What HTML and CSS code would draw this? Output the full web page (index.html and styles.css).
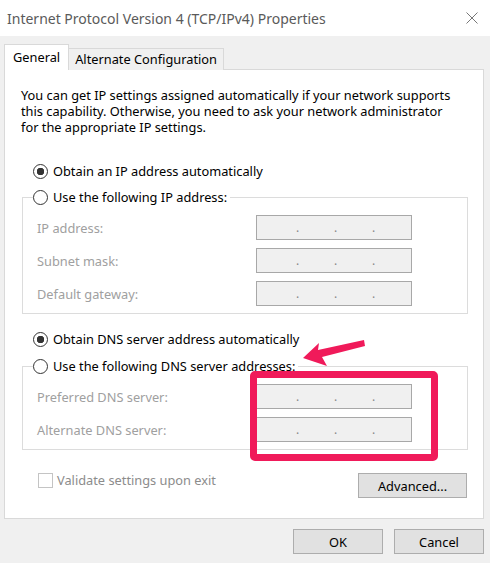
FILE: index.html
```
<!DOCTYPE html>
<html lang="en">

<head>
    <meta charset="UTF-8">
    <meta name="viewport" content="width=device-width, initial-scale=1.0">
    <title>Internet Protocol Version 4 (TCP/IPv4) Properties</title>
    <link rel="stylesheet" href="styles.css">
</head>

<body>
    <div class="dialog">
        <div class="titlebar">
            <span class="title">Internet Protocol Version 4 (TCP/IPv4) Properties</span>
            <svg class="close" width="12" height="12" viewBox="0 0 12 12">
                <path d="M0.5 0.5 L11.5 11.5 M11.5 0.5 L0.5 11.5" stroke="#777" stroke-width="1" fill="none" />
            </svg>
        </div>

        <div class="content">
            <div class="tabs">
                <div class="tab active">General</div>
                <div class="tab">Alternate Configuration</div>
            </div>

            <div class="panel">
                <p class="intro">You can get IP settings assigned automatically if your network supports<br>
                    this capability. Otherwise, you need to ask your network administrator<br>
                    for the appropriate IP settings.</p>

                <label class="radio first"><input type="radio" name="ip" checked> Obtain an IP address automatically</label>

                <fieldset class="group">
                    <legend><label class="radio"><input type="radio" name="ip"> Use the following IP address:</label></legend>
                    <div class="row">
                        <span class="lbl">IP address:</span>
                        <div class="ip"><span>.</span><span>.</span><span>.</span></div>
                    </div>
                    <div class="row">
                        <span class="lbl">Subnet mask:</span>
                        <div class="ip"><span>.</span><span>.</span><span>.</span></div>
                    </div>
                    <div class="row">
                        <span class="lbl">Default gateway:</span>
                        <div class="ip"><span>.</span><span>.</span><span>.</span></div>
                    </div>
                </fieldset>

                <label class="radio dns-auto"><input type="radio" name="dns" checked> Obtain DNS server address automatically</label>

                <fieldset class="group dns">
                    <legend><label class="radio"><input type="radio" name="dns"> Use the following DNS server addresses:</label></legend>
                    <div class="row">
                        <span class="lbl">Preferred DNS server:</span>
                        <div class="ip"><span>.</span><span>.</span><span>.</span></div>
                    </div>
                    <div class="row">
                        <span class="lbl">Alternate DNS server:</span>
                        <div class="ip"><span>.</span><span>.</span><span>.</span></div>
                    </div>
                </fieldset>

                <div class="bottom-row">
                    <label class="check"><span class="box"></span>Validate settings upon exit</label>
                    <button type="button" class="btn advanced">Advanced...</button>
                </div>
            </div>

            <div class="footer">
                <button type="button" class="btn">OK</button>
                <button type="button" class="btn">Cancel</button>
            </div>
        </div>

        <!-- annotation drawn over the screenshot -->
        <div class="mark-box"></div>
        <svg class="mark-arrow" width="490" height="563" viewBox="0 0 490 563">
            <polygon points="303,358 319,343 318,350 364,340 365,346 322,357 327,366" fill="#f01a5a" />
        </svg>
    </div>
</body>

</html>
```

FILE: styles.css
```
:root {
    --win-bg: #f0f0f0;
    --border: #d9d9d9;
    --text: #000;
    --disabled: #a0a0a0;
    --mark: #f01a5a;
}

body {
    margin: 0;
    font-family: "Noto Sans", "Open Sans", sans-serif;
    font-size: 12.8px;
    color: var(--text);
}

.dialog {
    position: relative;
    width: 490px;
    height: 563px;
    background-color: var(--win-bg);
    overflow: hidden;
}

.titlebar {
    height: 36px;
    background-color: #fff;
    display: flex;
    align-items: center;
    padding: 0 12px 0 7px;
}

.title {
    font-size: 14px;
    color: #5a5a5a;
}

.close {
    margin-left: auto;
}

.content {
    padding-top: 8px;
}

.tabs {
    display: flex;
    align-items: flex-end;
    height: 26px;
    padding-left: 4px;
    position: relative;
    z-index: 1;
}

.tab {
    height: 22px;
    box-sizing: border-box;
    border: 1px solid var(--border);
    border-bottom: none;
    padding: 0 6px;
    line-height: 21px;
    background-color: var(--win-bg);
}

.tab.active {
    height: 26px;
    background-color: #fff;
    padding: 0 8px;
    line-height: 25px;
}

.tab + .tab {
    border-left: none;
}

.panel {
    margin: -1px 0 0 4px;
    width: 480px;
    height: 450px;
    box-sizing: border-box;
    background-color: #fff;
    border: 1px solid var(--border);
    padding: 17px 15px 0 16px;
}

.intro {
    margin: 0;
    line-height: 16px;
    white-space: nowrap;
}

.radio {
    display: flex;
    align-items: center;
    gap: 5px;
    line-height: 16px;
    height: 16px;
}

.radio input {
    appearance: none;
    margin: 0;
    width: 15px;
    height: 15px;
    border: 1px solid #333;
    border-radius: 50%;
    box-sizing: border-box;
    background-color: #fff;
}

.radio input:checked {
    background: radial-gradient(circle, #333 0 3.5px, #fff 4px);
}

.radio.first {
    margin: 28px 0 0 12px;
}

.group {
    margin: 10px 0 0 1px;
    padding: 0 0 7px 14px;
    border: 1px solid #dcdcdc;
}

.group legend {
    padding: 0 3px 0 0;
    margin-left: -4px;
}

.row {
    display: flex;
    align-items: center;
    margin-top: 8px;
}

.row:first-of-type {
    margin-top: 10px;
}

.lbl {
    width: 219px;
    color: var(--disabled);
}

.ip {
    width: 156px;
    height: 25px;
    box-sizing: border-box;
    background-color: #f0f0f0;
    border: 1px solid #a8a8a8;
    display: flex;
    padding: 3px 0 0 39px;
    color: #888;
    font-size: 12px;
}

.ip span {
    width: 38px;
}

.radio.dns-auto {
    margin: 17px 0 0 12px;
}

.group.dns {
    margin-top: 11px;
}

.bottom-row {
    display: flex;
    align-items: flex-start;
    margin-top: 22px;
}

.check {
    display: flex;
    align-items: center;
    gap: 4px;
    margin-left: 17px;
    line-height: 16px;
    color: #8c8c8c;
}

.check .box {
    width: 15px;
    height: 15px;
    box-sizing: border-box;
    border: 1px solid #c4c4c4;
    background-color: #fff;
}

.btn {
    height: 25px;
    box-sizing: border-box;
    background-color: #e1e1e1;
    border: 1px solid #adadad;
    font-family: inherit;
    font-size: 12.8px;
    color: #000;
    padding: 0;
}

.btn.advanced {
    width: 109px;
    margin: 1px 1px 0 auto;
}

.footer {
    display: flex;
    justify-content: flex-end;
    gap: 11px;
    padding: 10px 6px 0 0;
}

.footer .btn {
    width: 90px;
}

.mark-box {
    position: absolute;
    left: 250px;
    top: 371px;
    width: 188px;
    height: 90px;
    box-sizing: border-box;
    border: 7px solid var(--mark);
    border-radius: 5px;
}

.mark-arrow {
    position: absolute;
    left: 0;
    top: 0;
    pointer-events: none;
}
```
